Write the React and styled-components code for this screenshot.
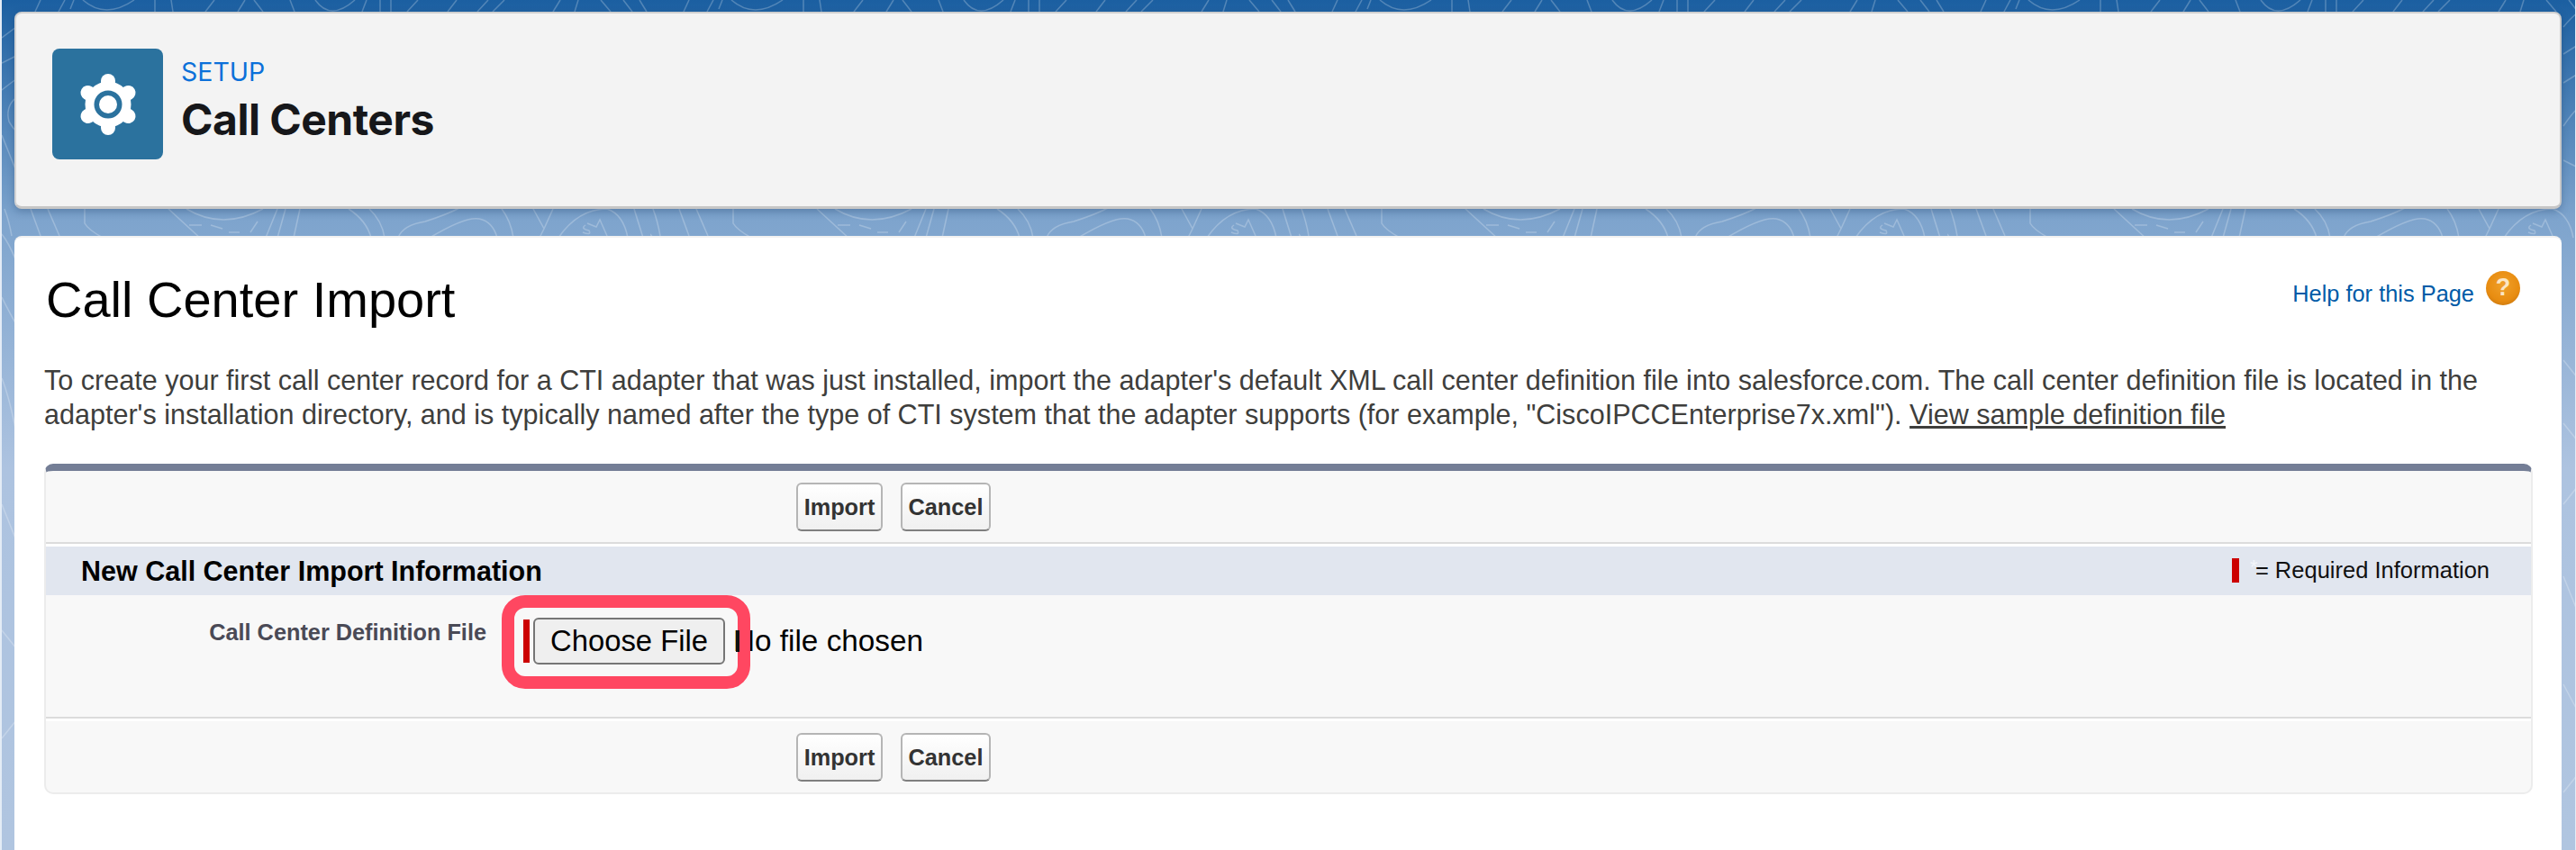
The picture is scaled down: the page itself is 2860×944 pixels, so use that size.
import React from "react";
import styled, { createGlobalStyle } from "styled-components";

const Global = createGlobalStyle`
  html, body { margin: 0; padding: 0; background: #fff; }
  body { width: 2860px; height: 944px; overflow: hidden; font-family: "Liberation Sans", Arial, sans-serif; }
  * { box-sizing: border-box; }
`;

const Page = styled.div`
  position: relative;
  width: 2860px;
  height: 944px;
  padding: 13px 15px 0 14px;
  overflow: hidden;
  background: linear-gradient(180deg, #1b5fa1 0, #7ea4cd 245px, #adc3e0 520px, #b0c5e0 944px);
  border-left: 2px solid #e4ecf6;
  border-right: 1px solid #e4ecf6;
`;

const Topo = styled.svg`
  position: absolute;
  inset: 0;
  width: 2860px;
  height: 944px;
`;

const HeaderCard = styled.header`
  position: relative;
  display: flex;
  align-items: flex-start;
  gap: 20px;
  height: 219px;
  padding: 39px 40px 0;
  background: #f3f3f3;
  border-radius: 8px;
  border-top: 2px solid #cfcfcf;
  border-right: 2px solid #c9c9c9;
  border-left: 2px solid #d4d4d4;
  border-bottom: 3px solid #c6c6c6;
  box-shadow: 0 3px 8px rgba(20, 50, 90, 0.3);
`;

const IconTile = styled.div`
  width: 123px;
  height: 123px;
  border-radius: 8px;
  background: #2b729e;
  display: flex;
  align-items: center;
  justify-content: center;
  flex: none;
`;

const HeaderText = styled.div`
  display: flex;
  flex-direction: column;
  font-family: Inter, "Liberation Sans", sans-serif;
`;

const Eyebrow = styled.span`
  font-size: 28.5px;
  line-height: 36px;
  margin-top: 8px;
  font-weight: 400;
  color: #0b70d9;
`;

const PageTitle = styled.h1`
  margin: 7px 0 0;
  font-size: 48px;
  line-height: 56px;
  font-weight: 700;
  letter-spacing: -0.5px;
  color: #16171a;
`;

const ContentCard = styled.main`
  position: relative;
  height: 700px;
  margin-top: 30px;
  padding: 0 32px 0 33px;
  background: #fff;
  border-radius: 8px 8px 0 0;
  border-top: 2px solid #f1f1f1;
`;

const TitleRow = styled.div`
  display: flex;
  justify-content: space-between;
  align-items: flex-start;
  padding-top: 37px;
  height: 118px;
`;

const ImportTitle = styled.h2`
  margin: 0 0 0 2px;
  font-size: 56px;
  line-height: 64px;
  font-weight: 400;
  color: #000;
`;

const HelpLink = styled.a`
  display: flex;
  align-items: flex-start;
  gap: 13px;
  margin-right: 14px;
  color: #015ba7;
  font-size: 25.4px;
  line-height: 30px;
`;

const HelpText = styled.span`
  margin-top: 10px;
`;

const HelpBadge = styled.span`
  width: 38px;
  height: 38px;
  border-radius: 50%;
  background: radial-gradient(circle at 50% 40%, #f0a02a 0, #e88c10 60%, #b46a10 100%);
  color: #fbe6c4;
  font-size: 27px;
  font-weight: 700;
  line-height: 36px;
  text-align: center;
`;

const Intro = styled.p`
  margin: 22px 0 0;
  width: 2763px;
  font-size: 30.55px;
  line-height: 37.5px;
  color: #3e3e3c;
`;

const IntroLink = styled.a`
  color: #3e3e3c;
  text-decoration: underline;
`;

const Block = styled.section`
  margin-top: 36px;
  width: 2763px;
  height: 367px;
  border-top: 8px solid #747e96;
  border-left: 2px solid #ececec;
  border-right: 2px solid #ececec;
  border-bottom: 2px solid #ececec;
  border-radius: 10px;
  background: #f8f8f8;
  display: flex;
  flex-direction: column;
`;

const ButtonRow = styled.div`
  display: flex;
  gap: 20px;
  height: 79px;
  flex: none;
  padding: 13px 0 0 833px;
`;

const Button = styled.button`
  width: ${(p) => p.$w}px;
  height: 54px;
  padding: 0;
  border: 2px solid #b5b5b5;
  border-bottom-color: #7f7f7f;
  border-radius: 6px;
  background: linear-gradient(180deg, #ffffff, #f0f0f0);
  color: #333;
  font-family: "Liberation Sans", Arial, sans-serif;
  font-size: 25.3px;
  font-weight: 700;
`;

const Divider = styled.div`
  height: 5px;
  flex: none;
  border-top: 2px solid #dcdcdc;
  background: #fff;
`;

const SectionBar = styled.div`
  height: 54px;
  flex: none;
  display: flex;
  align-items: center;
  justify-content: space-between;
  padding: 0 46px 0 39px;
  background: #e1e6ef;
`;

const SectionTitle = styled.h3`
  margin: 0;
  font-size: 30.5px;
  font-weight: 700;
  color: #000;
`;

const Legend = styled.div`
  display: flex;
  align-items: center;
  margin-top: -2px;
  font-size: 25.5px;
  color: #111;
`;

const RequiredBar = styled.span`
  display: block;
  width: ${(p) => p.$w}px;
  height: ${(p) => p.$h}px;
  background: #cc0000;
  flex: none;
`;

const Star = styled.span`
  margin: -6px 0 0 12px;
  width: 6px;
  color: #f3f5f9;
  font-size: 22px;
`;

const FieldRow = styled.div`
  position: relative;
  height: 135px;
  flex: none;
  display: flex;
  align-items: flex-start;
`;

const FieldLabel = styled.label`
  width: 489px;
  margin-top: 27px;
  text-align: right;
  font-size: 25.3px;
  line-height: 28px;
  font-weight: 700;
  color: #4a4a56;
`;

const FileField = styled.div`
  display: flex;
  align-items: center;
  margin: 25px 0 0 41px;
  font-size: 33.3px;
  color: #000;
`;

const FileButton = styled.button`
  width: 213px;
  height: 52px;
  margin: 0 9px 0 4px;
  padding: 0;
  border: 2px solid #767676;
  border-radius: 6px;
  background: #efefef;
  color: #000;
  font-family: "Liberation Sans", Arial, sans-serif;
  font-size: 32.8px;
`;

const Highlight = styled.div`
  position: absolute;
  left: 506px;
  top: 0;
  width: 276px;
  height: 104px;
  border: 14px solid #ff4761;
  border-radius: 26px;
`;

const StemOverlay = styled.span`
  position: absolute;
  left: 766px;
  top: 39px;
  width: 4px;
  height: 24px;
  background: #111;
`;

const Gear = () => (
  <svg width="70" height="70" viewBox="-35 -35 70 70" aria-hidden="true">
    {[0, 60, 120, 180, 240, 300].map((a) => (
      <rect key={a} x="-8" y="-34" width="16" height="26" rx="8" fill="#fff" transform={`rotate(${a})`} />
    ))}
    <circle r="25.5" fill="#fff" />
    <circle r="15.5" fill="#2b729e" />
    <circle r="10" fill="#fff" />
  </svg>
);

const TopoLines = () => (
  <Topo aria-hidden="true">
    <defs>
      <pattern id="topo" width="720" height="944" patternUnits="userSpaceOnUse">
        <g fill="none" stroke="#fff" strokeOpacity="0.24" strokeWidth="1.5">
          <path d="M3 232 Q8 245 11 262" />
          <path d="M32 232 L43 262" />
          <path d="M51 232 L64 262" />
          <path d="M92 232 V248 Q96 255 112 264" />
          <path d="M185 232 L222 266" />
          <path d="M205 232 Q245 256 290 232" />
          <path d="M208 250 H222 M232 250 L245 254 M252 258 H264 M276 258 L284 246" />
          <path d="M306 232 L293 264 M315 232 L306 264 M331 232 L324 264" />
          <path d="M385 232 Q405 245 410 264 M408 232 Q422 245 425 264" />
          <path d="M440 264 Q445 250 470 246 Q495 238 510 230" />
          <path d="M475 264 Q515 240 530 243 Q545 246 550 264" />
          <path d="M555 232 Q565 245 568 264" />
          <path d="M590 232 L602 254 L597 264 M612 232 L602 254" />
          <path d="M618 264 Q640 232 672 232 Q690 238 695 264" />
          <path d="M648 250 Q642 254 652 256 Q655 262 645 258 M650 248 L660 252 L664 244 L672 262" />
          <path d="M702 232 L712 264" />
          <path d="M43 0 L37 13 M70 0 L63 13 M80 0 L76 10 M90 0 Q115 22 147 0 M170 0 V13 M188 0 L190 13 M236 0 L226 13 M270 0 L262 13" />
          <path d="M280 0 L290 13 M320 0 L325 13 M348 0 Q365 24 392 0 M405 0 L400 13 M420 0 V13 M432 0 V13 M462 0 L450 13" />
          <path d="M505 0 L495 13 M540 0 L528 13 M558 0 L545 13 M620 0 L612 13 M640 0 L636 13 M665 0 L676 13 M690 0 L700 13 M708 0 L716 13" />
          <path d="M0 42 Q8 36 16 30 M0 70 Q8 66 16 62 M0 100 Q10 92 16 88" />
          <path d="M14 110 Q4 120 8 135 Q14 145 16 145" />
          <path d="M0 150 Q8 170 16 190 M0 260 Q8 270 16 290 M0 330 Q10 350 16 360 M0 420 Q8 440 16 480" />
          <path d="M684 30 Q692 20 700 14 M684 60 L700 50 M684 92 L700 82 M684 140 Q692 128 700 120" />
          <path d="M684 178 L700 186 M684 400 L700 420 M684 470 L700 490 M684 560 L700 540 M684 640 L700 680" />
          <path d="M0 560 Q8 580 16 600 M0 700 L16 720 M0 820 L16 800 M684 760 L700 790 M684 880 L700 860" />
        </g>
      </pattern>
    </defs>
    <rect width="2860" height="944" fill="url(#topo)" />
  </Topo>
);

const Actions = () => (
  <ButtonRow>
    <Button $w={96}>Import</Button>
    <Button $w={100}>Cancel</Button>
  </ButtonRow>
);

export default function App() {
  return (
    <>
      <Global />
      <Page>
        <TopoLines />
        <HeaderCard>
          <IconTile>
            <Gear />
          </IconTile>
          <HeaderText>
            <Eyebrow>SETUP</Eyebrow>
            <PageTitle>Call Centers</PageTitle>
          </HeaderText>
        </HeaderCard>
        <ContentCard>
          <TitleRow>
            <ImportTitle>Call Center Import</ImportTitle>
            <HelpLink>
              <HelpText>Help for this Page</HelpText>
              <HelpBadge>?</HelpBadge>
            </HelpLink>
          </TitleRow>
          <Intro>
            To create your first call center record for a CTI adapter that was just installed, import the adapter's default XML call center definition file into salesforce.com. The call center definition file is located in the adapter's installation directory, and is typically named after the type of CTI system that the adapter supports (for example, "CiscoIPCCEnterprise7x.xml"). <IntroLink>View sample definition file</IntroLink>
          </Intro>
          <Block>
            <Actions />
            <Divider />
            <SectionBar>
              <SectionTitle>New Call Center Import Information</SectionTitle>
              <Legend>
                <RequiredBar $w={8} $h={27} />
                <Star>*</Star>
                <span>= Required Information</span>
              </Legend>
            </SectionBar>
            <FieldRow>
              <FieldLabel>Call Center Definition File</FieldLabel>
              <FileField>
                <RequiredBar $w={7} $h={48} />
                <FileButton>Choose File</FileButton>
                <span>No file chosen</span>
              </FileField>
              <Highlight />
              <StemOverlay />
            </FieldRow>
            <Divider />
            <Actions />
          </Block>
        </ContentCard>
      </Page>
    </>
  );
}
